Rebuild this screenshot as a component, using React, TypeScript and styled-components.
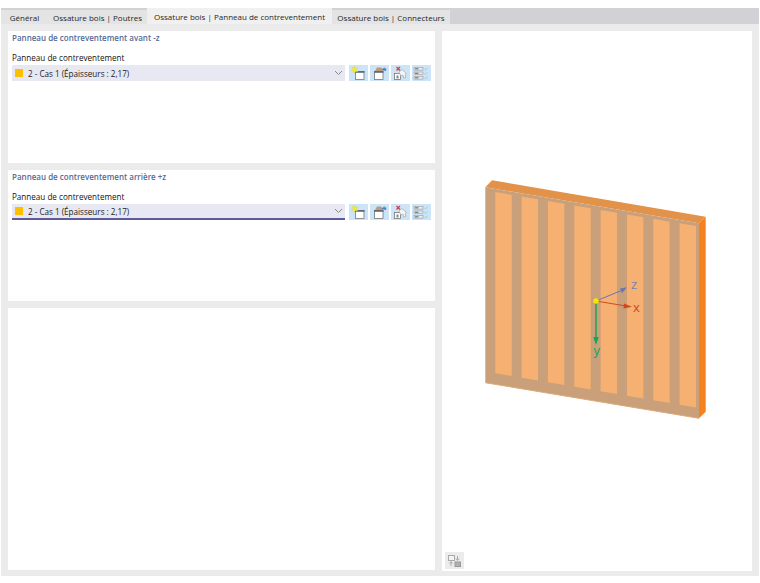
import * as React from "react";
import styled, { createGlobalStyle } from "styled-components";

const GlobalStyle = createGlobalStyle`
  html, body {
    margin: 0;
    padding: 0;
    background: #fff;
  }
  body {
    font-family: "Open Sans", "Noto Sans", sans-serif;
  }
`;

const Page = styled.div`
  width: 760px;
  height: 583px;
  padding: 8px 1px 7px 1px;
  box-sizing: border-box;
  display: flex;
  flex-direction: column;
`;

const TabBar = styled.div`
  height: 16px;
  display: flex;
  align-items: flex-end;
  background: #d2d2d6;
`;

const Tab = styled.div<{ $active?: boolean; $width: number }>`
  width: ${(p) => p.$width}px;
  height: ${(p) => (p.$active ? 16 : 14)}px;
  display: flex;
  align-items: center;
  justify-content: center;
  font-size: 8px;
  color: #262626;
  white-space: nowrap;
  background: ${(p) => (p.$active ? "#f0f0f0" : "#e4e4e4")};
`;

const Body = styled.div`
  flex: 1;
  padding: 7px 7px 5px 7px;
  display: grid;
  grid-template-columns: 426px 310px;
  column-gap: 8px;
  background: #ebebeb;
`;

const LeftColumn = styled.div`
  display: grid;
  grid-template-rows: 132px 131px 262px;
  row-gap: 7px;
`;

const Panel = styled.section`
  padding: 0 4px;
  background: #fff;
`;

const SectionTitle = styled.div`
  height: 22px;
  padding-top: 1px;
  box-sizing: border-box;
  font-size: 8px;
  line-height: 12px;
  font-weight: 600;
  color: #566a96;
`;

const FieldLabel = styled.div`
  font-size: 8.1px;
  line-height: 9px;
  color: #111;
  margin-bottom: 3px;
`;

const FieldRow = styled.div`
  display: flex;
  height: 16px;
`;

const Select = styled.div<{ $focused?: boolean }>`
  width: 333px;
  height: 16px;
  margin-right: 4px;
  padding: 0 2px 0 3px;
  box-sizing: border-box;
  display: flex;
  align-items: center;
  background: #e8e8f2;
  border-bottom: ${(p) => (p.$focused ? "2px solid #5f5a9e" : "none")};
  font-size: 8.1px;
  color: #1c1c1c;
`;

const Swatch = styled.span`
  width: 8px;
  height: 8px;
  margin-right: 5px;
  background: #fcc000;
`;

const SelectText = styled.span`
  flex: 1;
`;

const Tools = styled.div`
  display: flex;
  gap: 2.25px;
`;

const ToolButton = styled.div`
  width: 18.75px;
  height: 16px;
  display: flex;
  align-items: center;
  justify-content: center;
  background: #cce4f7;
`;

const ViewPanel = styled.section`
  position: relative;
  background: #fff;
`;

const Model = styled.svg`
  display: block;
  width: 310px;
  height: 539px;
`;

const AxisLabel = styled.text<{ $color: string }>`
  font-family: "Open Sans", sans-serif;
  font-size: 13px;
  fill: ${(p) => p.$color};
`;

const ViewButton = styled.div`
  position: absolute;
  left: 3px;
  bottom: 2px;
  width: 19px;
  height: 17px;
  display: flex;
  align-items: center;
  justify-content: center;
  background: #ececec;
`;

const Chevron = () => (
  <svg width="9" height="6" viewBox="0 0 9 6">
    <path d="M1 1l3.5 3.5L8 1" fill="none" stroke="#888" strokeWidth="1" />
  </svg>
);

const NewIcon = () => (
  <svg width="16" height="15" viewBox="0 0 16 15">
    <rect x="5.5" y="5.5" width="8.500" height="8" fill="#fff" stroke="#777" strokeWidth="0.8" />
    <rect x="5" y="5" width="9.500" height="1.800" fill="#5f6b7a" />
    <path d="M4.500 0l1 2.400 2.500-.5-1.500 2 1.300 2-2.400-.4L4 7.600l-.6-2.400-2.400-.4 2-1.400L2.300.9l2 1.200z" fill="#f5ea3a" stroke="#d8cc30" strokeWidth="0.3" />
  </svg>
);

const CopyIcon = () => (
  <svg width="16" height="15" viewBox="0 0 16 15">
    <rect x="3.500" y="5.500" width="8.500" height="8" fill="#fff" stroke="#777" strokeWidth="0.8" />
    <rect x="3" y="5" width="9.500" height="1.800" fill="#5f6b7a" />
    <path d="M4 5l2-3.500h4.500L12 5z" fill="#c09a78" />
    <path d="M10.500 4l3-3v1.600H15.500L15 5z" fill="#4a7fc0" />
  </svg>
);

const DeleteIcon = () => (
  <svg width="16" height="15" viewBox="0 0 16 15">
    <rect x="2.500" y="7.500" width="6" height="6" fill="#fff" stroke="#777" strokeWidth="0.8" />
    <rect x="4.500" y="9.500" width="2" height="3" fill="#888" />
    <path d="M7 6l3-2.500 4.500 4-1.500 1 .8 3-2 .6-1-3-2 1z" fill="#f6f6f6" stroke="#a5a5a5" strokeWidth="0.7" />
    <path d="M4.500 1l3.500 3.500M8 1L4.500 4.500" stroke="#e0364a" strokeWidth="1.300" />
  </svg>
);

const ListIcon = () => (
  <svg width="16" height="15" viewBox="0 0 16 15">
    {[1.500, 6, 10.500].map((y) => (
      <g key={y}>
        <rect x="1" y={y} width="9" height="2.600" fill="#e6edf2" stroke="#8c8c8c" strokeWidth="0.5" />
        <rect x="2" y={y + 0.7} width="3.500" height="1.200" fill="#777" />
        <path d={`M11.500 ${y + 1.300}l1 1 2-1.800`} fill="none" stroke="#8ac7b0" strokeWidth="0.8" />
      </g>
    ))}
  </svg>
);

const SwapIcon = () => (
  <svg width="15" height="14" viewBox="0 0 15 14">
    <rect x="1.500" y="1.500" width="6" height="5" fill="#f4f4f4" stroke="#aaa" />
    <rect x="8" y="8" width="5.500" height="4.500" fill="#b0b0b0" stroke="#999" />
    <path d="M10.500 2v4M9 4.500l1.500 2 1.500-2M4 8v4M2.500 9.500L4 7.500l1.500 2" fill="none" stroke="#aaa" />
  </svg>
);

// battens on the front face, one every 26.33px along the sloped wall
const battenStarts = [0, 1, 2, 3, 4, 5, 6, 7].map((i) => 53.3 + i * 26.33);
const slope = 0.17;
const battenPoints = (x: number) => {
  const top = 161 + (x - 53.3) * slope;
  const bottom = 342.3 + (x - 53.3) * slope;
  const w = 16.4;
  return `${x},${top} ${x + w},${top + w * slope} ${x + w},${bottom + w * slope} ${x},${bottom}`;
};

const WallModel = () => (
  <Model viewBox="0 0 310 539">
    <polygon points="43.300,156.300 50,149.300 263.700,185.700 257,192.300" fill="#e3924a" />
    <polygon points="257,192.300 263.700,185.700 263.700,380.700 257,387.300" fill="#f58220" />
    <polygon points="43.300,156.300 257,192.300 257,387.300 43.300,351.700" fill="#c9a07a" />
    <line x1="43.300" y1="351.700" x2="257" y2="387.300" stroke="#d9a878" strokeWidth="1" />
    {battenStarts.map((x) => (
      <polygon key={x} points={battenPoints(x)} fill="#f5b072" />
    ))}
    <line x1="154" y1="270" x2="183" y2="258" stroke="#6d74b0" strokeWidth="1" />
    <polygon points="185,256.300 178,257.500 180,262" fill="#6d74b0" />
    <line x1="154" y1="270" x2="184" y2="275" stroke="#cf4a1e" strokeWidth="1" />
    <polygon points="190,275.700 182,272.500 181.500,277.500" fill="#cf4a1e" />
    <line x1="154" y1="270" x2="154" y2="308" stroke="#13a650" strokeWidth="1.400" />
    <polygon points="154,314 151.300,306 156.700,306" fill="#13a650" />
    <circle cx="154" cy="270" r="2.800" fill="#f7e400" />
    <AxisLabel $color="#7a80b4" x="189" y="258">z</AxisLabel>
    <AxisLabel $color="#d2451c" x="191" y="281">x</AxisLabel>
    <AxisLabel $color="#13a650" x="151.500" y="324">y</AxisLabel>
  </Model>
);

const BracingField = ({ focused }: { focused?: boolean }) => (
  <>
    <FieldLabel>Panneau de contreventement</FieldLabel>
    <FieldRow>
      <Select $focused={focused}>
        <Swatch />
        <SelectText>2 - Cas 1 (Épaisseurs : 2,17)</SelectText>
        <Chevron />
      </Select>
      <Tools>
        <ToolButton><NewIcon /></ToolButton>
        <ToolButton><CopyIcon /></ToolButton>
        <ToolButton><DeleteIcon /></ToolButton>
        <ToolButton><ListIcon /></ToolButton>
      </Tools>
    </FieldRow>
  </>
);

export default function App() {
  return (
    <Page>
      <GlobalStyle />
      <TabBar>
        <Tab $width={47}>Général</Tab>
        <Tab $width={99}>Ossature bois | Poutres</Tab>
        <Tab $width={185} $active>Ossature bois | Panneau de contreventement</Tab>
        <Tab $width={118}>Ossature bois | Connecteurs</Tab>
      </TabBar>
      <Body>
        <LeftColumn>
          <Panel>
            <SectionTitle>Panneau de contreventement avant -z</SectionTitle>
            <BracingField />
          </Panel>
          <Panel>
            <SectionTitle>Panneau de contreventement arrière +z</SectionTitle>
            <BracingField focused />
          </Panel>
          <Panel />
        </LeftColumn>
        <ViewPanel>
          <WallModel />
          <ViewButton><SwapIcon /></ViewButton>
        </ViewPanel>
      </Body>
    </Page>
  );
}
